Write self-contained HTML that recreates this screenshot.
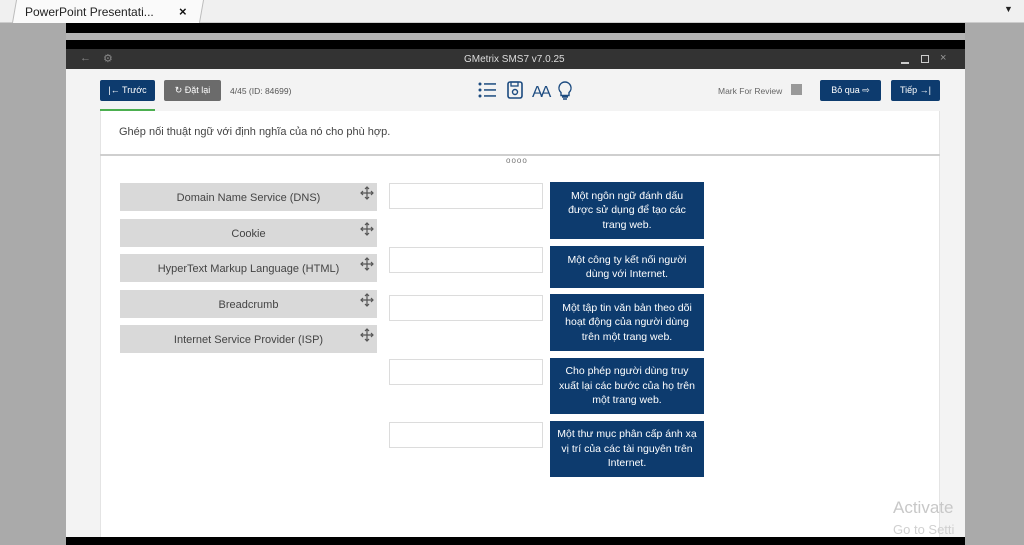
<!DOCTYPE html>
<html><head><meta charset="utf-8"><style>
*{margin:0;padding:0;box-sizing:border-box}
body{width:1024px;height:545px;overflow:hidden;background:#aaaaaa;font-family:"Liberation Sans",sans-serif;position:relative}
.a{position:absolute}
.item{position:absolute;left:120px;width:257px;height:28px;background:#d9d9d9;color:#444;font-size:11px;text-align:center;line-height:30px}
.item svg{position:absolute;right:3px;top:3px}
.drop{position:absolute;left:389px;width:154px;height:26px;background:#fff;border:1px solid #dcdcdc}
.def{position:absolute;left:550px;width:154px;background:#0d3b6e;color:#fff;font-size:10.5px;text-align:center;line-height:14.5px;display:flex;align-items:center;justify-content:center;padding:0 9px}
.btn{position:absolute;top:80px;height:21px;color:#fff;font-size:9px;line-height:21px;text-align:center;border-radius:2px}
</style></head><body>
<div class="a" style="left:0;top:0;width:1024px;height:23px;background:#f0f0f0;border-bottom:1px solid #ccc"></div>
<div class="a" style="left:10px;top:0;width:188px;height:23px;background:#fafafa;border-left:1px solid #bbb;border-right:1px solid #bbb;transform:skewX(-10deg) translateX(4px)"></div>
<div class="a" style="left:25px;top:5px;font-size:12px;color:#222">PowerPoint Presentati...</div>
<div class="a" style="left:179px;top:4px;font-size:13px;color:#111;font-weight:bold">×</div>
<div class="a" style="left:1004px;top:4px;font-size:9px;color:#222">▼</div>
<div class="a" style="left:66px;top:23px;width:899px;height:10px;background:#000"></div>
<div class="a" style="left:66px;top:33px;width:899px;height:7px;background:#b4b4b4"></div>
<div class="a" style="left:66px;top:40px;width:899px;height:9px;background:#000"></div>
<div class="a" style="left:66px;top:49px;width:899px;height:20px;background:#333"></div>
<div class="a" style="left:80px;top:52px;font-size:11px;color:#888">←</div>
<div class="a" style="left:103px;top:52px;font-size:11px;color:#888">⚙</div>
<div class="a" style="left:464px;top:54px;font-size:10px;color:#ddd">GMetrix SMS7 v7.0.25</div>
<div class="a" style="left:901px;top:62px;width:8px;height:2px;background:#ccc"></div>
<div class="a" style="left:921px;top:55px;width:8px;height:8px;border:1.5px solid #ccc"></div>
<div class="a" style="left:940px;top:52px;font-size:11px;color:#999">×</div>
<div class="a" style="left:66px;top:69px;width:899px;height:468px;background:#f3f3f3"></div>
<div class="a" style="left:66px;top:537px;width:899px;height:8px;background:#000"></div>
<div class="btn" style="left:100px;width:55px;background:#0d3b6e">|← Trước</div>
<div class="btn" style="left:164px;width:57px;background:#6b6b6b">↻ Đặt lại</div>
<div class="a" style="left:230px;top:86px;font-size:8.5px;color:#555">4/45 (ID: 84699)</div>
<svg class="a" style="left:477px;top:80px" width="100" height="22" viewBox="0 0 100 22">
<g fill="#1c4b80"><circle cx="3" cy="4" r="1.5"/><circle cx="3" cy="10" r="1.5"/><circle cx="3" cy="16" r="1.5"/><rect x="7" y="3.2" width="12" height="1.5"/><rect x="7" y="9.2" width="12" height="1.5"/><rect x="7" y="15.2" width="12" height="1.5"/></g>
<rect x="31" y="2" width="14" height="16" rx="2" fill="none" stroke="#1c4b80" stroke-width="1.6"/><rect x="34" y="2" width="7" height="4" fill="none" stroke="#1c4b80" stroke-width="1.3"/><circle cx="38" cy="12" r="2.5" fill="none" stroke="#1c4b80" stroke-width="1.4"/>
<text x="55" y="17" font-size="16" fill="#1c4b80" font-family="Liberation Sans" letter-spacing="-2">AA</text>
<path d="M88 2a6 6 0 0 0-4 10.5v3h8v-3A6 6 0 0 0 88 2zM85 17h6M86 19h4" fill="none" stroke="#1c4b80" stroke-width="1.4"/>
</svg>
<div class="a" style="left:718px;top:86px;font-size:8.5px;color:#666">Mark For Review</div>
<div class="a" style="left:791px;top:84px;width:11px;height:11px;background:#999"></div>
<div class="btn" style="left:820px;width:61px;background:#0d3b6e">Bỏ qua ⇨</div>
<div class="btn" style="left:891px;width:49px;background:#0d3b6e">Tiếp →|</div>
<div class="a" style="left:100px;top:109px;width:55px;height:2px;background:#4caf50"></div>
<div class="a" style="left:100px;top:111px;width:840px;height:426px;background:#fff;border-left:1px solid #e4e4e4;border-right:1px solid #e4e4e4"></div>
<div class="a" style="left:119px;top:126px;font-size:11px;color:#444">Ghép nối thuật ngữ với định nghĩa của nó cho phù hợp.</div>
<div class="a" style="left:100px;top:154px;width:840px;height:2px;background:#cfcfcf"></div>
<div class="a" style="left:506px;top:156px;font-size:8px;color:#777;letter-spacing:1px">oooo</div>
<div class="item" style="top:183px">Domain Name Service (DNS)<svg width="14" height="14" viewBox="0 0 14 14"><path d="M7 1v12M1 7h12M5 3l2-2 2 2M5 11l2 2 2-2M3 5l-2 2 2 2M11 5l2 2-2 2" fill="none" stroke="#555" stroke-width="1.2"/></svg></div>
<div class="item" style="top:219px">Cookie<svg width="14" height="14" viewBox="0 0 14 14"><path d="M7 1v12M1 7h12M5 3l2-2 2 2M5 11l2 2 2-2M3 5l-2 2 2 2M11 5l2 2-2 2" fill="none" stroke="#555" stroke-width="1.2"/></svg></div>
<div class="item" style="top:254px">HyperText Markup Language (HTML)<svg width="14" height="14" viewBox="0 0 14 14"><path d="M7 1v12M1 7h12M5 3l2-2 2 2M5 11l2 2 2-2M3 5l-2 2 2 2M11 5l2 2-2 2" fill="none" stroke="#555" stroke-width="1.2"/></svg></div>
<div class="item" style="top:290px">Breadcrumb<svg width="14" height="14" viewBox="0 0 14 14"><path d="M7 1v12M1 7h12M5 3l2-2 2 2M5 11l2 2 2-2M3 5l-2 2 2 2M11 5l2 2-2 2" fill="none" stroke="#555" stroke-width="1.2"/></svg></div>
<div class="item" style="top:325px">Internet Service Provider (ISP)<svg width="14" height="14" viewBox="0 0 14 14"><path d="M7 1v12M1 7h12M5 3l2-2 2 2M5 11l2 2 2-2M3 5l-2 2 2 2M11 5l2 2-2 2" fill="none" stroke="#555" stroke-width="1.2"/></svg></div>
<div class="drop" style="top:183px"></div>
<div class="drop" style="top:247px"></div>
<div class="drop" style="top:295px"></div>
<div class="drop" style="top:359px"></div>
<div class="drop" style="top:422px"></div>
<div class="def" style="top:182px;height:57px;padding:0 14px">Một ngôn ngữ đánh dấu được sử dụng để tạo các trang web.</div>
<div class="def" style="top:246px;height:42px">Một công ty kết nối người dùng với Internet.</div>
<div class="def" style="top:294px;height:57px">Một tập tin văn bản theo dõi hoạt động của người dùng trên một trang web.</div>
<div class="def" style="top:358px;height:56px">Cho phép người dùng truy xuất lại các bước của họ trên một trang web.</div>
<div class="def" style="top:421px;height:56px;padding:0 7px">Một thư mục phân cấp ánh xạ vị trí của các tài nguyên trên Internet.</div>
<div class="a" style="left:893px;top:498px;font-size:17px;color:#c8c8c8">Activate</div>
<div class="a" style="left:893px;top:522px;font-size:13px;color:#d0d0d0">Go to Setti</div>
</body></html>
